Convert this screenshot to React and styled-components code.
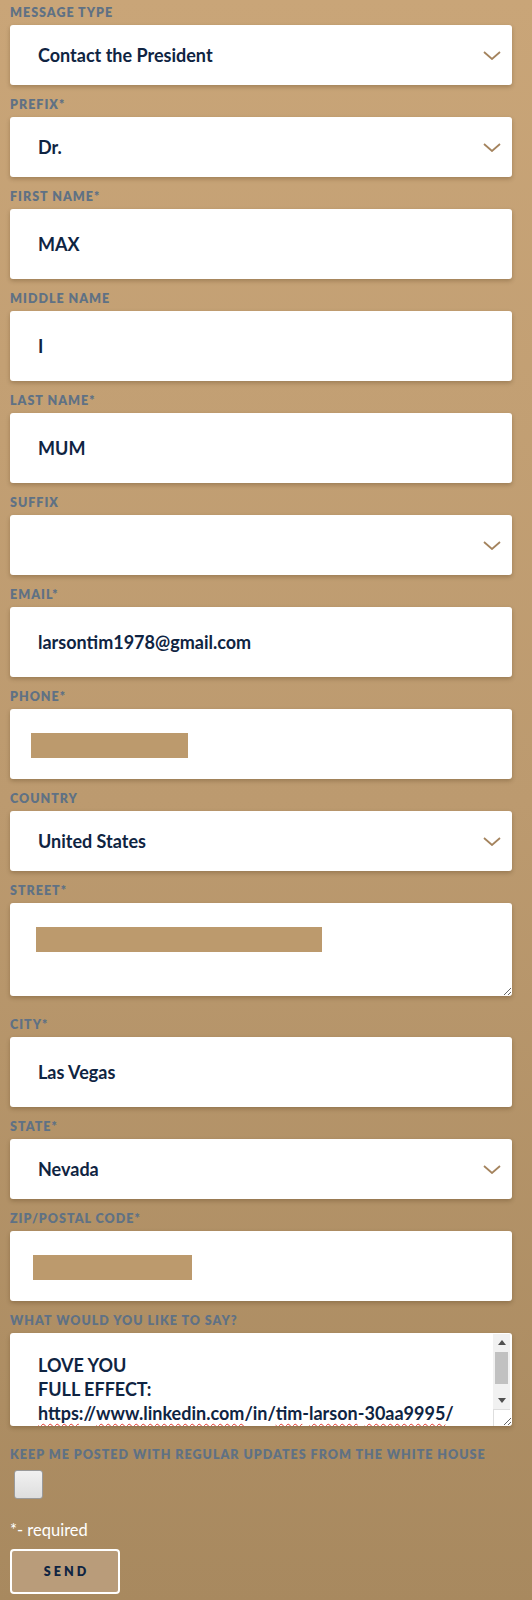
import React from "react";
import styled, { createGlobalStyle } from "styled-components";

const GlobalStyle = createGlobalStyle`
  html, body { margin: 0; padding: 0; }
  body {
    min-height: 1600px;
    background: linear-gradient(180deg, #c9a578 0%, #bc9a6f 50%, #a8895f 100%);
    font-family: Lato, "Liberation Sans", sans-serif;
  }
  * { box-sizing: border-box; }
`;

const Page = styled.main`
  padding: 4px 20px 8px 10px;
`;

const Form = styled.form`
  display: flex;
  flex-direction: column;
`;

const Field = styled.div`
  display: flex;
  flex-direction: column;
  margin-bottom: ${(p) => (p.$tall ? 20 : 11)}px;
`;

const Label = styled.label`
  font-size: 12.5px;
  line-height: 18px;
  font-weight: 800;
  letter-spacing: 1px;
  text-transform: uppercase;
  white-space: nowrap;
  color: #5f7184;
  margin-bottom: 3px;
`;

const Box = styled.div`
  position: relative;
  background: #fff;
  border-radius: 3px;
  box-shadow: 0 2px 4px rgba(60, 40, 10, 0.28);
`;

const controlText = `
  font-family: Lato, "Liberation Sans", sans-serif;
  font-size: 18px;
  font-weight: 700;
  color: #0f2442;
`;

const TextInput = styled.input`
  ${controlText}
  display: block;
  width: 100%;
  height: 70px;
  padding: 0 28px;
  border: 0;
  background: transparent;
  border-radius: 3px;
  outline: none;
`;

const Select = styled.select`
  ${controlText}
  display: block;
  width: 100%;
  height: 60px;
  padding: 0 50px 0 28px;
  border: 0;
  background: transparent;
  border-radius: 3px;
  appearance: none;
  -webkit-appearance: none;
  outline: none;
`;

const ChevronIcon = styled.svg`
  position: absolute;
  right: 11px;
  top: 50%;
  width: 18px;
  height: 9px;
  margin-top: -4px;
  pointer-events: none;
`;

const TextArea = styled.textarea`
  ${controlText}
  display: block;
  width: 100%;
  height: 93px;
  padding: 21px 28px;
  border: 0;
  background: transparent;
  border-radius: 3px;
  resize: vertical;
  outline: none;
`;

const MessageArea = styled.div`
  ${controlText}
  height: 93px;
  padding: 20px 40px 45px 28px;
  line-height: 24px;
  overflow-y: scroll;
  resize: vertical;
  border-radius: 3px;
  white-space: pre-wrap;
`;

/* drawn scrollbar lying over the message box's right edge */
const ScrollBar = styled.div`
  position: absolute;
  top: 1px;
  right: 2px;
  width: 17px;
  height: 75px;
  display: flex;
  flex-direction: column;
  background: #f1f1f1;
  pointer-events: none;
`;

const ScrollArrow = styled.span`
  flex: 0 0 17px;
  display: flex;
  align-items: center;
  justify-content: center;

  &::before {
    content: "";
    width: 0;
    height: 0;
    border-left: 4px solid transparent;
    border-right: 4px solid transparent;
    ${(p) =>
      p.$down
        ? "border-top: 5px solid #505050;"
        : "border-bottom: 5px solid #505050;"}
  }
`;

const ScrollTrack = styled.span`
  flex: 1;
  display: flex;
  flex-direction: column;
  padding: 1px 2px;
`;

const ScrollThumb = styled.span`
  height: 32px;
  background: #c1c1c1;
`;

const ResizeCorner = styled.span`
  position: absolute;
  right: 2px;
  bottom: 0;
  width: 17px;
  height: 17px;
  border-top: 1px solid #dedede;
  border-left: 1px solid #dedede;
  pointer-events: none;
`;

const Misspelled = styled.span`
  text-decoration: underline wavy #e0352b;
  text-decoration-thickness: 1px;
  text-underline-offset: 3px;
`;

const Redaction = styled.span`
  position: absolute;
  left: ${(p) => p.$left}px;
  top: 24px;
  width: ${(p) => p.$width}px;
  height: 25px;
  background: #bc9a6d;
  pointer-events: none;
`;

const CheckField = styled.div`
  display: flex;
  flex-direction: column;
`;

const CheckLabel = styled(Label)`
  margin-bottom: 6px;
`;

const Checkbox = styled.input`
  appearance: none;
  -webkit-appearance: none;
  width: 29px;
  height: 29px;
  margin: 0 0 0 4px;
  border: 1px solid #9a9a9a;
  border-radius: 3px;
  background: linear-gradient(180deg, #f1f1f1 0%, #dedede 100%);
`;

const Required = styled.p`
  margin: 21px 0 9px;
  font-size: 16.5px;
  line-height: 20px;
  color: #fff;
`;

const SendButton = styled.button`
  width: 110px;
  height: 45px;
  border: 2px solid #fff;
  border-radius: 4px;
  background: #b99c7a;
  font-family: Lato, "Liberation Sans", sans-serif;
  font-size: 12.5px;
  font-weight: 800;
  letter-spacing: 3px;
  color: #0f2442;
  padding: 0 0 0 3px;
`;

const Chevron = () => (
  <ChevronIcon viewBox="0 0 18 9" aria-hidden="true">
    <path d="M1 1 L9 8 L17 1" fill="none" stroke="#a4835d" strokeWidth="1.8" />
  </ChevronIcon>
);

const SelectField = ({ label, value, options }) => (
  <Field>
    <Label>{label}</Label>
    <Box>
      <Select defaultValue={value}>
        {options.map((o) => (
          <option key={o} value={o}>
            {o}
          </option>
        ))}
      </Select>
      <Chevron />
    </Box>
  </Field>
);

const InputField = ({ label, value, redact }) => (
  <Field>
    <Label>{label}</Label>
    <Box>
      <TextInput defaultValue={value} />
      {redact && <Redaction $left={redact.left} $width={redact.width} />}
    </Box>
  </Field>
);

export default function App() {
  return (
    <>
      <GlobalStyle />
      <Page>
        <Form onSubmit={(e) => e.preventDefault()}>
          <SelectField
            label="Message Type"
            value="Contact the President"
            options={["Contact the President", "Contact the First Lady"]}
          />
          <SelectField label="Prefix*" value="Dr." options={["Mr.", "Mrs.", "Ms.", "Dr."]} />
          <InputField label="First Name*" value="MAX" />
          <InputField label="Middle Name" value="I" />
          <InputField label="Last Name*" value="MUM" />
          <SelectField label="Suffix" value="" options={["", "Jr.", "Sr.", "II", "III"]} />
          <InputField label="Email*" value="larsontim1978@gmail.com" />
          <InputField label="Phone*" value="" redact={{ left: 21, width: 157 }} />
          <SelectField
            label="Country"
            value="United States"
            options={["United States", "Canada", "Mexico"]}
          />
          <Field $tall>
            <Label>Street*</Label>
            <Box>
              <TextArea defaultValue="" />
              <Redaction $left={26} $width={286} />
            </Box>
          </Field>
          <InputField label="City*" value="Las Vegas" />
          <SelectField label="State*" value="Nevada" options={["Nevada", "California", "Arizona"]} />
          <InputField label="Zip/Postal Code*" value="" redact={{ left: 23, width: 159 }} />
          <Field $tall>
            <Label>What would you like to say?</Label>
            <Box>
              <MessageArea role="textbox" aria-multiline="true">
                {"LOVE YOU\nFULL EFFECT:\n"}
                <Misspelled>https</Misspelled>
                {"://"}
                <Misspelled>www.linkedin.com</Misspelled>
                {"/in/"}
                <Misspelled>tim</Misspelled>-<Misspelled>larson</Misspelled>-
                <Misspelled>30aa9995</Misspelled>/
              </MessageArea>
              <ScrollBar aria-hidden="true">
                <ScrollArrow />
                <ScrollTrack>
                  <ScrollThumb />
                </ScrollTrack>
                <ScrollArrow $down />
              </ScrollBar>
              <ResizeCorner aria-hidden="true" />
            </Box>
          </Field>
          <CheckField>
            <CheckLabel>Keep me posted with regular updates from the White House</CheckLabel>
            <Checkbox type="checkbox" />
          </CheckField>
          <Required>*- required</Required>
          <div>
            <SendButton type="submit">SEND</SendButton>
          </div>
        </Form>
      </Page>
    </>
  );
}
